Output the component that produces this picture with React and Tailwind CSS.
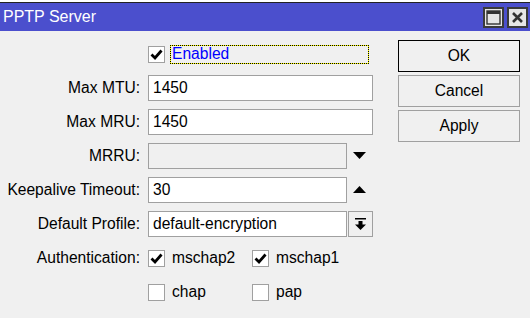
import React from "react"

function Check({ checked }) {
  return (
    <div className="w-[17px] h-[17px] border border-[#a0a0a0] bg-white flex items-center justify-center shrink-0">
      {checked && (
        <svg width="13" height="13" viewBox="0 0 13 13">
          <path d="M1.5 6.5 L5 10 L11.5 2.5" fill="none" stroke="#000" strokeWidth="2.8" />
        </svg>
      )}
    </div>
  )
}

function Field({ label, children }) {
  return (
    <div className="flex items-center h-[26px]">
      <div className="w-[141px] text-right pr-[1px] whitespace-nowrap">{label}</div>
      <div className="ml-[7px] flex items-center">{children}</div>
    </div>
  )
}

function Input({ value, width = "w-[225px]", disabled }) {
  return (
    <div
      className={`${width} h-[26px] border border-[#a0a0a0] flex items-center pl-[4px] ${
        disabled ? "bg-[#f0f0f0]" : "bg-white"
      }`}
    >
      {value}
    </div>
  )
}

function Option({ label, checked }) {
  return (
    <div className="w-[104px] flex items-center">
      <Check checked={checked} />
      <span className="ml-[7px]">{label}</span>
    </div>
  )
}

export default function App() {
  return (
    <div className="w-[530px] h-[318px] bg-[#f0f0f0] overflow-hidden text-[15.6px] text-black font-['Liberation_Sans',Arial,sans-serif] leading-none">
      <div className="h-[3px] bg-white border-b border-[#222]" />
      <div className="h-[28px] bg-[#4b4fcd] flex items-center pl-[3px] pr-[2px]">
        <span className="text-white text-[16px]">PPTP Server</span>
        <div className="ml-auto flex gap-[3px]">
          <div className="w-[21px] h-[21px] border-2 border-[#3a3a3a] bg-[#e6e6e6] flex items-center justify-center">
            <svg width="15" height="15" viewBox="0 0 15 15">
              <rect x="1" y="1" width="13" height="13" fill="none" stroke="#333" strokeWidth="1.4" />
              <rect x="1" y="1" width="13" height="3" fill="#333" />
            </svg>
          </div>
          <div className="w-[21px] h-[21px] border-2 border-[#3a3a3a] bg-[#e6e6e6] flex items-center justify-center">
            <svg width="13" height="13" viewBox="0 0 13 13">
              <path d="M2 2 L11 11 M11 2 L2 11" stroke="#333" strokeWidth="2.6" />
            </svg>
          </div>
        </div>
      </div>

      <div className="flex">
        <div className="pt-[10px] flex flex-col gap-[8px]">
          <Field label="">
            <Check checked />
            <div className="ml-[5px] w-[199px] h-[19px] border border-dotted border-black bg-[#ffff00]">
              <div className="w-full h-full bg-[#f0f0f0] flex items-center pl-[1px] text-[#0000ff]">Enabled</div>
            </div>
          </Field>
          <Field label="Max MTU:">
            <Input value="1450" />
          </Field>
          <Field label="Max MRU:">
            <Input value="1450" />
          </Field>
          <Field label="MRRU:">
            <Input value="" width="w-[199px]" disabled />
            <svg className="ml-[6px]" width="13" height="8" viewBox="0 0 13 8">
              <polygon points="0,0 13,0 6.5,7" fill="#000" />
            </svg>
          </Field>
          <Field label="Keepalive Timeout:">
            <Input value="30" width="w-[199px]" />
            <svg className="ml-[6px]" width="13" height="8" viewBox="0 0 13 8">
              <polygon points="0,7 13,7 6.5,0" fill="#000" />
            </svg>
          </Field>
          <Field label="Default Profile:">
            <Input value="default-encryption" width="w-[199px]" />
            <div className="ml-[1px] w-[25px] h-[26px] border border-[#a0a0a0] bg-[#f0f0f0] flex items-center justify-center">
              <svg width="11" height="13" viewBox="0 0 11 13">
                <rect x="0" y="0" width="11" height="1.5" fill="#000" />
                <rect x="3.5" y="3" width="4" height="4" fill="#000" />
                <polygon points="0,6.5 11,6.5 5.5,12" fill="#000" />
              </svg>
            </div>
          </Field>
          <Field label="Authentication:">
            <Option label="mschap2" checked />
            <Option label="mschap1" checked />
          </Field>
          <Field label="">
            <Option label="chap" />
            <Option label="pap" />
          </Field>
        </div>

        <div className="ml-[25px] pt-[9px] flex flex-col gap-[3px]">
          <button className="w-[122px] h-[32px] border border-black bg-[#f0f0f0]">OK</button>
          <button className="w-[122px] h-[32px] border border-[#a0a0a0] bg-[#f0f0f0]">Cancel</button>
          <button className="w-[122px] h-[32px] border border-[#a0a0a0] bg-[#f0f0f0]">Apply</button>
        </div>
      </div>
    </div>
  )
}
